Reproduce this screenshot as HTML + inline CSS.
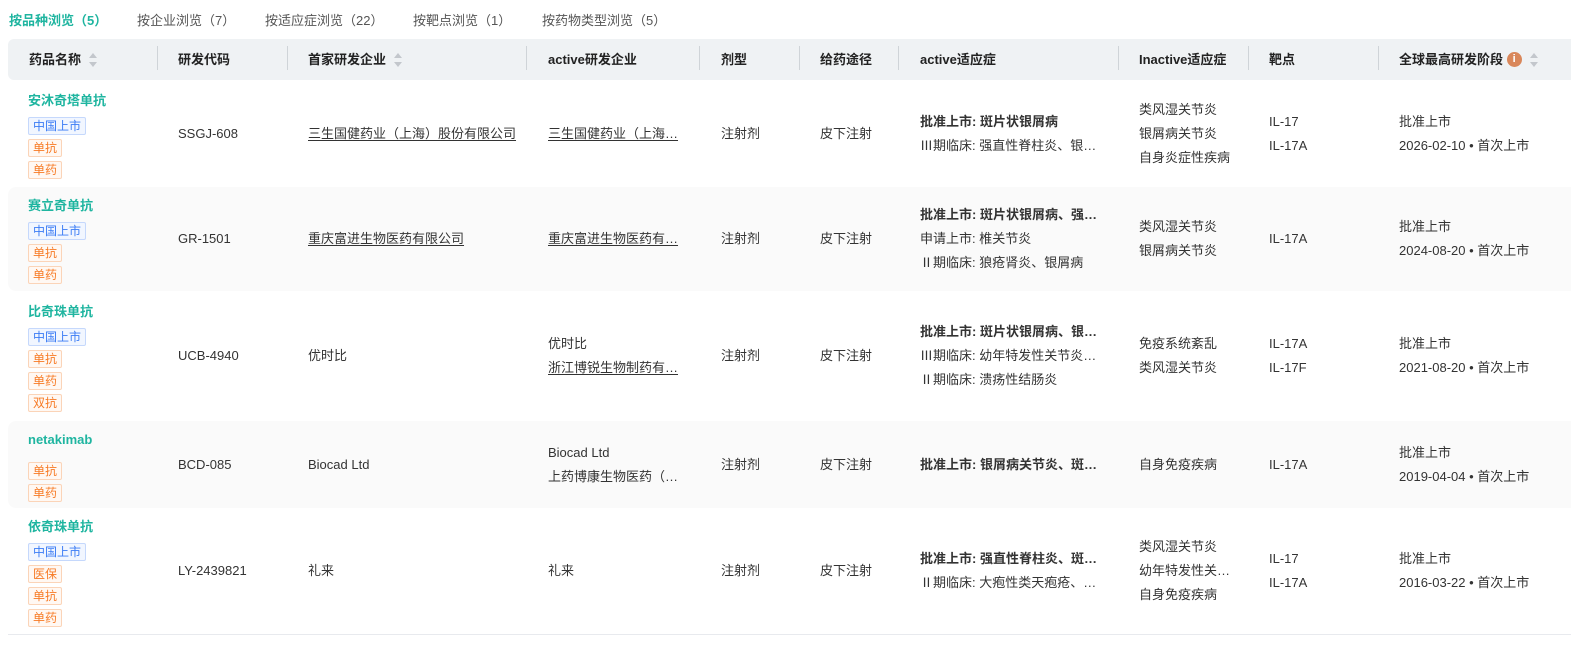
<!DOCTYPE html><html><head><meta charset="utf-8"><style>
*{margin:0;padding:0;box-sizing:border-box}
body{width:1571px;height:645px;background:#fff;font-family:"Liberation Sans","Noto Sans CJK SC",sans-serif;font-size:13px;color:#333;position:relative;overflow:hidden}
.tabs{position:absolute;top:10px;left:9px;height:20px;font-size:13px;color:#555}
.tabs span{position:absolute;white-space:nowrap;top:0}
.hdr{position:absolute;left:8px;top:39px;width:1563px;height:41px;background:#eff2f4;border-radius:6px 0 0 6px;font-weight:bold;color:#222}
.hc{position:absolute;top:0;height:41px;line-height:41px;white-space:nowrap}
.sep{position:absolute;top:7px;width:1px;height:24px;background:#cfd4d8}
.sort{display:inline-block;vertical-align:middle;margin-left:8px;width:9px;height:14px;position:relative;top:-1px}
.sort:before{content:"";position:absolute;left:0;top:0;border:4.5px solid transparent;border-bottom:5px solid #c3c7cc;border-top:0}
.sort:after{content:"";position:absolute;left:0;bottom:0;border:4.5px solid transparent;border-top:5px solid #c3c7cc;border-bottom:0}
.row{position:absolute;left:8px;width:1563px}
.row.g{background:#fafafa;border-radius:8px 0 0 8px}
.c{position:absolute;top:0;height:100%;display:flex;flex-direction:column;justify-content:center;white-space:nowrap}
.c div{line-height:24px}
.nm{color:#1fb5a0;font-weight:bold;line-height:22px}
.tag{display:inline-block;height:18px;line-height:16px;padding:0 4px;border:1px solid;border-radius:2px;font-size:12px;margin-top:4px;align-self:flex-start}
.b{color:#3b7cf5;border-color:#c5d8fc;background:#f1f6ff}
.o{color:#f77a24;border-color:#fbd4b8;background:#fff8f3}
u{text-decoration:underline;text-underline-offset:2px}
.bold{font-weight:bold}
</style></head><body>
<div class="tabs">
<span style="left:0;color:#1fb5a0;font-weight:bold">按品种浏览（5）</span>
<span style="left:128px">按企业浏览（7）</span>
<span style="left:256px">按适应症浏览（22）</span>
<span style="left:404px">按靶点浏览（1）</span>
<span style="left:533px">按药物类型浏览（5）</span>
</div>
<div class="hdr">
<div class="hc" style="left:21px">药品名称<span class="sort"></span></div>
<div class="sep" style="left:149px"></div>
<div class="hc" style="left:170px">研发代码</div>
<div class="sep" style="left:279px"></div>
<div class="hc" style="left:300px">首家研发企业<span class="sort"></span></div>
<div class="sep" style="left:518px"></div>
<div class="hc" style="left:540px">active研发企业</div>
<div class="sep" style="left:691px"></div>
<div class="hc" style="left:713px">剂型</div>
<div class="sep" style="left:791px"></div>
<div class="hc" style="left:812px">给药途径</div>
<div class="sep" style="left:890px"></div>
<div class="hc" style="left:912px">active适应症</div>
<div class="sep" style="left:1110px"></div>
<div class="hc" style="left:1131px">Inactive适应症</div>
<div class="sep" style="left:1240px"></div>
<div class="hc" style="left:1261px">靶点</div>
<div class="sep" style="left:1370px"></div>
<div class="hc" style="left:1391px">全球最高研发阶段 <span style="display:inline-block;width:15px;height:15px;border-radius:50%;background:#d9875a;color:#fff;font-size:11px;line-height:15px;text-align:center;vertical-align:middle;position:relative;top:-1px">i</span><span class="sort"></span></div>
</div>

<div class="row" style="top:80px;height:107px">
<div class="c" style="left:20px"><div class="nm">安沐奇塔单抗</div><span class="tag b">中国上市</span><span class="tag o">单抗</span><span class="tag o">单药</span></div>
<div class="c" style="left:170px"><div>SSGJ-608</div></div>
<div class="c" style="left:300px"><div><u>三生国健药业（上海）股份有限公司</u></div></div>
<div class="c" style="left:540px"><div><u>三生国健药业（上海…</u></div></div>
<div class="c" style="left:713px"><div>注射剂</div></div>
<div class="c" style="left:812px"><div>皮下注射</div></div>
<div class="c" style="left:912px"><div class="bold">批准上市: 斑片状银屑病</div><div>Ⅲ期临床: 强直性脊柱炎、银…</div></div>
<div class="c" style="left:1131px"><div>类风湿关节炎</div><div>银屑病关节炎</div><div>自身炎症性疾病</div></div>
<div class="c" style="left:1261px"><div>IL-17</div><div>IL-17A</div></div>
<div class="c" style="left:1391px"><div>批准上市</div><div>2026-02-10 • 首次上市</div></div>
</div>

<div class="row g" style="top:187px;height:104px">
<div class="c" style="left:20px"><div class="nm">赛立奇单抗</div><span class="tag b">中国上市</span><span class="tag o">单抗</span><span class="tag o">单药</span></div>
<div class="c" style="left:170px"><div>GR-1501</div></div>
<div class="c" style="left:300px"><div><u>重庆富进生物医药有限公司</u></div></div>
<div class="c" style="left:540px"><div><u>重庆富进生物医药有…</u></div></div>
<div class="c" style="left:713px"><div>注射剂</div></div>
<div class="c" style="left:812px"><div>皮下注射</div></div>
<div class="c" style="left:912px"><div class="bold">批准上市: 斑片状银屑病、强…</div><div>申请上市: 椎关节炎</div><div>Ⅱ期临床: 狼疮肾炎、银屑病</div></div>
<div class="c" style="left:1131px"><div>类风湿关节炎</div><div>银屑病关节炎</div></div>
<div class="c" style="left:1261px"><div>IL-17A</div></div>
<div class="c" style="left:1391px"><div>批准上市</div><div>2024-08-20 • 首次上市</div></div>
</div>

<div class="row" style="top:291px;height:130px">
<div class="c" style="left:20px"><div class="nm">比奇珠单抗</div><span class="tag b">中国上市</span><span class="tag o">单抗</span><span class="tag o">单药</span><span class="tag o">双抗</span></div>
<div class="c" style="left:170px"><div>UCB-4940</div></div>
<div class="c" style="left:300px"><div>优时比</div></div>
<div class="c" style="left:540px"><div>优时比</div><div><u>浙江博锐生物制药有…</u></div></div>
<div class="c" style="left:713px"><div>注射剂</div></div>
<div class="c" style="left:812px"><div>皮下注射</div></div>
<div class="c" style="left:912px"><div class="bold">批准上市: 斑片状银屑病、银…</div><div>Ⅲ期临床: 幼年特发性关节炎…</div><div>Ⅱ期临床: 溃疡性结肠炎</div></div>
<div class="c" style="left:1131px"><div>免疫系统紊乱</div><div>类风湿关节炎</div></div>
<div class="c" style="left:1261px"><div>IL-17A</div><div>IL-17F</div></div>
<div class="c" style="left:1391px"><div>批准上市</div><div>2021-08-20 • 首次上市</div></div>
</div>

<div class="row g" style="top:421px;height:87px">
<div class="c" style="left:20px"><div class="nm" style="margin-bottom:6px">netakimab</div><span class="tag o">单抗</span><span class="tag o">单药</span></div>
<div class="c" style="left:170px"><div>BCD-085</div></div>
<div class="c" style="left:300px"><div>Biocad Ltd</div></div>
<div class="c" style="left:540px"><div>Biocad Ltd</div><div>上药博康生物医药（…</div></div>
<div class="c" style="left:713px"><div>注射剂</div></div>
<div class="c" style="left:812px"><div>皮下注射</div></div>
<div class="c" style="left:912px"><div class="bold">批准上市: 银屑病关节炎、斑…</div></div>
<div class="c" style="left:1131px"><div>自身免疫疾病</div></div>
<div class="c" style="left:1261px"><div>IL-17A</div></div>
<div class="c" style="left:1391px"><div>批准上市</div><div>2019-04-04 • 首次上市</div></div>
</div>

<div class="row" style="top:508px;height:127px;border-bottom:1px solid #e8eaee">
<div class="c" style="left:20px"><div class="nm">依奇珠单抗</div><span class="tag b">中国上市</span><span class="tag o">医保</span><span class="tag o">单抗</span><span class="tag o">单药</span></div>
<div class="c" style="left:170px"><div>LY-2439821</div></div>
<div class="c" style="left:300px"><div>礼来</div></div>
<div class="c" style="left:540px"><div>礼来</div></div>
<div class="c" style="left:713px"><div>注射剂</div></div>
<div class="c" style="left:812px"><div>皮下注射</div></div>
<div class="c" style="left:912px"><div class="bold">批准上市: 强直性脊柱炎、斑…</div><div>Ⅱ期临床: 大疱性类天疱疮、…</div></div>
<div class="c" style="left:1131px"><div>类风湿关节炎</div><div>幼年特发性关…</div><div>自身免疫疾病</div></div>
<div class="c" style="left:1261px"><div>IL-17</div><div>IL-17A</div></div>
<div class="c" style="left:1391px"><div>批准上市</div><div>2016-03-22 • 首次上市</div></div>
</div>
</body></html>
